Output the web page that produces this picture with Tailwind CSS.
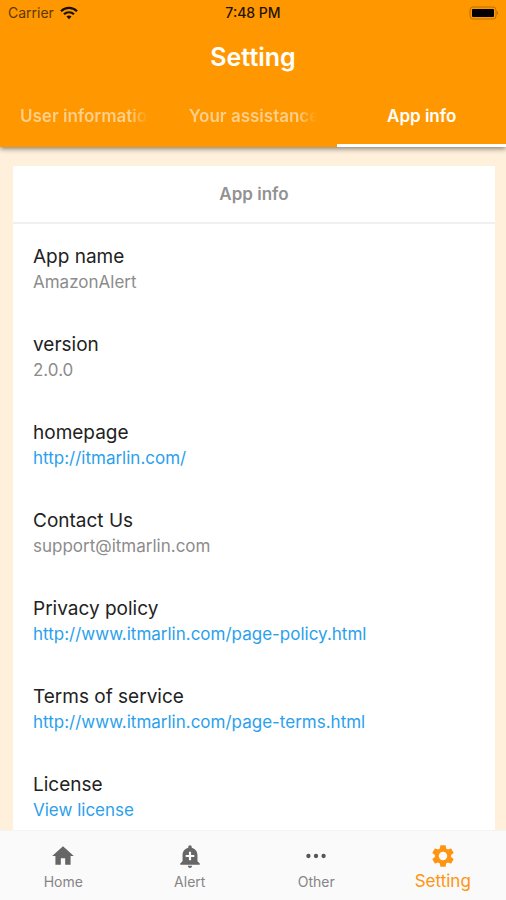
<!DOCTYPE html>
<html lang="en">
<head>
<meta charset="utf-8">
<meta name="viewport" content="width=device-width, initial-scale=1">
<title>Setting</title>
<script src="https://cdn.jsdelivr.net/npm/@tailwindcss/browser@4"></script>
</head>
<body class="flex h-screen flex-col overflow-hidden bg-[#fff0dc] font-['Inter','Liberation_Sans',sans-serif] text-[#222]">
  <header class="relative z-10 shrink-0 bg-[#ff9800] shadow-[0_2px_5px_rgba(0,0,0,0.45)]">
    <div class="grid h-[26px] grid-cols-3 items-center px-2 text-sm text-[#5c3800]">
      <div class="flex items-center gap-1.5">
        <span>Carrier</span>
        <svg class="h-3.5 w-[18px]" viewBox="0 0 18 14" fill="none" stroke="#1a1000" stroke-width="2.2" aria-label="Wi-Fi">
          <path d="M1 5.2a11.4 11.4 0 0 1 16 0"/>
          <path d="M4 8.3a7.1 7.1 0 0 1 10 0"/>
          <path d="M9 13.2 6.5 10.6a3.6 3.6 0 0 1 5 0z" fill="#1a1000" stroke="none"/>
        </svg>
      </div>
      <span class="text-center font-medium text-[#1f1300]">7:48 PM</span>
      <svg class="h-3.5 w-[30px] justify-self-end" viewBox="0 0 30 14" aria-label="Battery">
        <rect x="2" y="1" width="26" height="12" rx="3" fill="none" stroke="#b87000"/>
        <rect x="4" y="3" width="22" height="8" rx="1" fill="#000"/>
        <path d="M28.8 5v4q1.2-.6 1.2-2t-1.2-2z" fill="#b06a00"/>
      </svg>
    </div>
    <h1 class="flex h-[61px] items-center justify-center pt-0.5 text-[25px] font-semibold text-white">Setting</h1>
    <nav class="grid h-[60px] grid-cols-3 text-[17px] font-semibold text-white">
      <button class="flex items-center overflow-hidden border-b-3 border-transparent px-5 pt-[3px]"><span class="block w-full overflow-hidden bg-linear-to-r from-white/55 from-85% to-transparent bg-clip-text text-left whitespace-nowrap text-transparent">User information</span></button>
      <button class="flex items-center overflow-hidden border-b-3 border-transparent px-5 pt-[3px]"><span class="block w-full overflow-hidden bg-linear-to-r from-white/55 from-85% to-transparent bg-clip-text text-left whitespace-nowrap text-transparent">Your assistance</span></button>
      <button class="border-b-3 border-white px-5 pt-[3px]">App info</button>
    </nav>
  </header>

  <main class="min-h-0 flex-1 overflow-hidden pt-[19px] pr-[11px] pl-[13px]">
    <section class="bg-white">
      <h2 class="flex h-[58px] items-center justify-center border-b-2 border-[#f0f0f0] pt-0.5 text-[17px] font-semibold text-[#929292]">App info</h2>
      <dl class="px-5">
        <div class="pt-5 pb-[18px]">
          <dt class="text-[19px] leading-[26px]">App name</dt>
          <dd class="text-[17px] leading-6 text-[#8c8c8c]">AmazonAlert</dd>
        </div>
        <div class="pt-5 pb-[18px]">
          <dt class="text-[19px] leading-[26px]">version</dt>
          <dd class="text-[17px] leading-6 text-[#8c8c8c]">2.0.0</dd>
        </div>
        <div class="pt-5 pb-[18px]">
          <dt class="text-[19px] leading-[26px]">homepage</dt>
          <dd class="text-[17px] leading-6"><a class="text-[#2b9fec]" href="http://itmarlin.com/">http://itmarlin.com/</a></dd>
        </div>
        <div class="pt-5 pb-[18px]">
          <dt class="text-[19px] leading-[26px]">Contact Us</dt>
          <dd class="text-[17px] leading-6 text-[#8c8c8c]">support@itmarlin.com</dd>
        </div>
        <div class="pt-5 pb-[18px]">
          <dt class="text-[19px] leading-[26px]">Privacy policy</dt>
          <dd class="text-[17px] leading-6"><a class="text-[#2b9fec]" href="http://www.itmarlin.com/page-policy.html">http://www.itmarlin.com/page-policy.html</a></dd>
        </div>
        <div class="pt-5 pb-[18px]">
          <dt class="text-[19px] leading-[26px]">Terms of service</dt>
          <dd class="text-[17px] leading-6"><a class="text-[#2b9fec]" href="http://www.itmarlin.com/page-terms.html">http://www.itmarlin.com/page-terms.html</a></dd>
        </div>
        <div class="pt-5 pb-[18px]">
          <dt class="text-[19px] leading-[26px]">License</dt>
          <dd class="text-[17px] leading-6"><a class="text-[#2b9fec]" href="#license">View license</a></dd>
        </div>
      </dl>
    </section>
  </main>

  <nav class="grid h-[70px] shrink-0 grid-cols-4 border-t border-[#f3f3f3] bg-[#fafafa] text-sm text-[#858585]">
    <a href="#home" class="flex flex-col items-center pt-3">
      <svg class="size-[26px] fill-[#666]" viewBox="0 0 24 24" aria-hidden="true"><path d="M10 20v-6h4v6h5v-8h3L12 3 2 12h3v8z"/></svg>
      <span class="leading-[26px]">Home</span>
    </a>
    <a href="#alert" class="flex flex-col items-center pt-3">
      <svg class="size-[26px] fill-[#666]" viewBox="0 0 24 24" aria-hidden="true"><path d="M10.01 21.01c0 1.1.89 1.99 1.99 1.99s1.99-.89 1.99-1.99h-3.98zm8.87-4.19V11c0-3.25-2.25-5.97-5.29-6.69v-.72C13.59 2.71 12.88 2 12 2s-1.59.71-1.59 1.59v.72C7.37 5.03 5.12 7.75 5.12 11v5.82L3 18.94V20h18v-1.06l-2.12-2.12zM16 13.01h-3v3h-2v-3H8V11h3V8h2v3h3v2.01z"/></svg>
      <span class="leading-[26px]">Alert</span>
    </a>
    <a href="#other" class="flex flex-col items-center pt-3">
      <svg class="size-[26px] fill-[#555]" viewBox="0 0 24 24" aria-hidden="true"><circle cx="5" cy="12" r="2"/><circle cx="12" cy="12" r="2"/><circle cx="19" cy="12" r="2"/></svg>
      <span class="leading-[26px]">Other</span>
    </a>
    <a href="#setting" class="flex flex-col items-center pt-3 text-[17px] text-[#ff9410]">
      <svg class="size-[26px] fill-[#ff9410]" viewBox="0 0 24 24" aria-hidden="true"><path d="M19.43 12.98c.04-.32.07-.64.07-.98s-.03-.66-.07-.98l2.11-1.65c.19-.15.24-.42.12-.64l-2-3.46c-.12-.22-.39-.3-.61-.22l-2.49 1c-.52-.4-1.08-.73-1.69-.98l-.38-2.65C14.46 2.18 14.25 2 14 2h-4c-.25 0-.46.18-.49.42l-.38 2.65c-.61.25-1.17.59-1.69.98l-2.49-1c-.23-.09-.49 0-.61.22l-2 3.46c-.13.22-.07.49.12.64l2.11 1.65c-.04.32-.07.65-.07.98s.03.66.07.98l-2.11 1.65c-.19.15-.24.42-.12.64l2 3.46c.12.22.39.3.61.22l2.49-1c.52.4 1.08.73 1.69.98l.38 2.65c.03.24.24.42.49.42h4c.25 0 .46-.18.49-.42l.38-2.65c.61-.25 1.17-.59 1.69-.98l2.49 1c.23.09.49 0 .61-.22l2-3.46c.12-.22.07-.49-.12-.64l-2.11-1.65zM12 15.9a3.9 3.9 0 1 1 0-7.8 3.9 3.9 0 0 1 0 7.8z"/></svg>
      <span class="leading-6">Setting</span>
    </a>
  </nav>
</body>
</html>
